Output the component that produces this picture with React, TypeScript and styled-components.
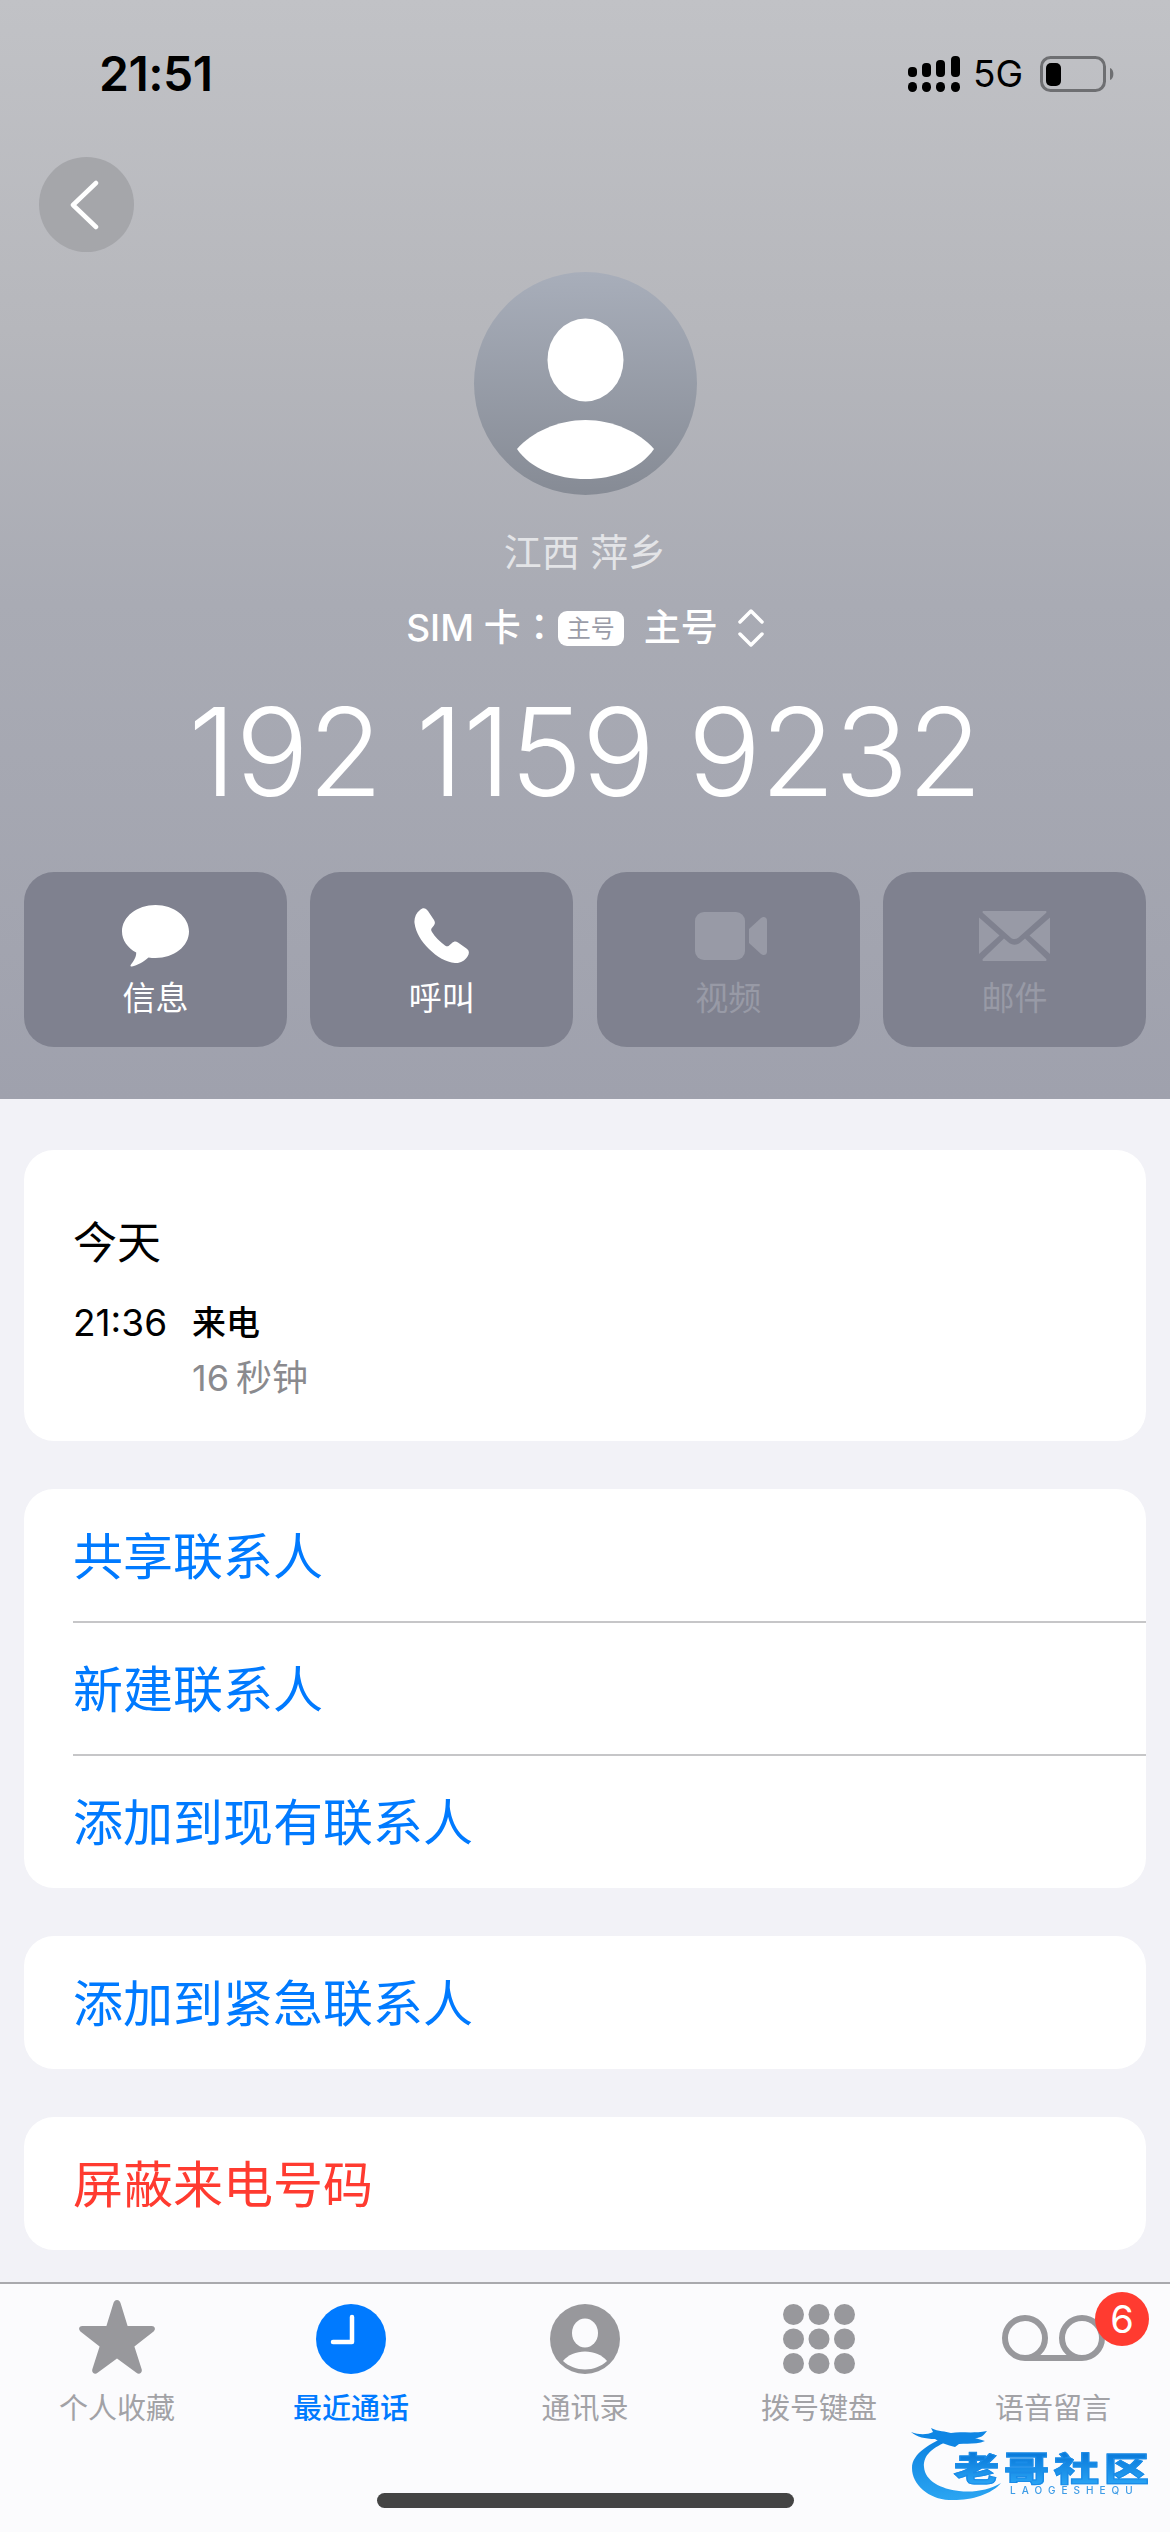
import React from 'react';
import styled, { createGlobalStyle } from 'styled-components';

const GlobalStyle = createGlobalStyle`
  html, body {
    margin: 0;
    padding: 0;
    background: #f2f2f7;
    font-family: Inter, "Noto Sans CJK SC", sans-serif;
  }
  * {
    box-sizing: border-box;
  }
`;

const Page = styled.div`
  width: 1170px;
  height: 2532px;
  display: flex;
  flex-direction: column;
  overflow: hidden;
  background: #f2f2f7;
`;

const Header = styled.header`
  height: 1099px;
  flex-shrink: 0;
  display: flex;
  flex-direction: column;
  background: linear-gradient(180deg, #c1c2c6 0%, #b6b7bc 30%, #a9abb4 55%, #9fa1ad 100%);
`;

const StatusBar = styled.div`
  height: 148px;
  flex-shrink: 0;
  display: flex;
  align-items: center;
  justify-content: space-between;
  padding: 0 55px 0 99px;
`;

const Time = styled.div`
  font-size: 48px;
  font-weight: 600;
  line-height: 56px;
  letter-spacing: -0.5px;
  color: #000;
`;

const StatusIcons = styled.div`
  display: flex;
  align-items: center;
`;

const NetworkLabel = styled.span`
  margin: 0 17px 0 13px;
  font-size: 37px;
  line-height: 40px;
  color: #000;
`;

const BackButton = styled.button`
  width: 95px;
  height: 95px;
  margin: 9px 0 0 39px;
  padding: 0 5px 0 0;
  border: none;
  border-radius: 50%;
  display: flex;
  align-items: center;
  justify-content: center;
  background: #a5a6aa;
`;

const Avatar = styled.div`
  width: 223px;
  height: 223px;
  margin: 20px auto 0;
  border-radius: 50%;
  overflow: hidden;
  background: linear-gradient(180deg, #a8aeba 0%, #868b95 100%);
`;

const Location = styled.div`
  margin-top: 32px;
  text-align: center;
  font-size: 38px;
  line-height: 50px;
  color: #e3e4e7;
`;

const SimLine = styled.div`
  margin-top: 26px;
  height: 50px;
  display: flex;
  align-items: center;
  justify-content: center;
  color: #fff;
  font-size: 37px;
  font-weight: 500;
  line-height: 50px;
`;

const SimLabel = styled.span`
  font-family: Inter, "Noto Sans CJK TC", sans-serif;
`;

const SimBadge = styled.span`
  width: 66px;
  height: 35px;
  margin: 0 20px 0 0;
  border-radius: 9px;
  display: flex;
  align-items: center;
  justify-content: center;
  background: #fff;
  color: #9a9ca8;
  font-size: 24px;
  font-weight: 400;
  line-height: 35px;
`;

const SimChevrons = styled.svg`
  margin-left: 20px;
`;

const PhoneNumber = styled.div`
  margin-top: 39px;
  text-align: center;
  font-size: 122px;
  font-weight: 350;
  line-height: 120px;
  letter-spacing: -0.8px;
  color: #fff;
`;

const Actions = styled.div`
  margin-top: 60px;
  padding: 0 24px;
  display: grid;
  grid-template-columns: repeat(4, 263px);
  justify-content: space-between;
`;

const ActionButton = styled.div<{ $disabled?: boolean }>`
  height: 175px;
  border-radius: 30px;
  display: flex;
  flex-direction: column;
  align-items: center;
  background: #7f818f;
  color: ${(p) => (p.$disabled ? '#989aa6' : '#fff')};
`;

const ActionIcon = styled.div`
  height: 100px;
  width: 100%;
  display: flex;
  align-items: center;
  justify-content: center;
  padding-top: 28px;
`;

const ActionLabel = styled.span`
  font-size: 33px;
  line-height: 44px;
  margin-top: 4px;
`;

const Content = styled.main`
  flex: 1;
  display: flex;
  flex-direction: column;
  gap: 48px;
  padding: 51px 24px 0;
`;

const Card = styled.section`
  border-radius: 30px;
  background: #fff;
  overflow: hidden;
`;

const HistoryCard = styled(Card)`
  height: 291px;
  padding: 65px 49px 0;
`;

const HistoryDay = styled.div`
  font-size: 44px;
  line-height: 56px;
  color: #000;
`;

const HistoryRow = styled.div`
  margin-top: 27px;
  display: flex;
`;

const HistoryTime = styled.div`
  width: 119px;
  font-size: 37px;
  line-height: 50px;
  color: #000;
`;

const HistoryType = styled.div`
  font-size: 34px;
  font-weight: 500;
  line-height: 50px;
  color: #000;
`;

const HistoryDuration = styled.div`
  margin-top: 5px;
  font-size: 36px;
  line-height: 50px;
  word-spacing: -3px;
  color: #8a8a8e;
`;

const ActionRow = styled.div<{ $danger?: boolean }>`
  height: 133px;
  margin-left: 49px;
  padding-top: 2px;
  display: flex;
  align-items: center;
  font-size: 50px;
  line-height: 60px;
  color: ${(p) => (p.$danger ? '#ff3b30' : '#007aff')};

  & + & {
    height: 134px;
    margin-top: -1px;
    padding-top: 1px;
    border-top: 2px solid #c6c6c8;
  }
`;

const TabBar = styled.nav`
  position: relative;
  height: 250px;
  flex-shrink: 0;
  display: grid;
  grid-template-columns: repeat(5, 234px);
  border-top: 2px solid #a9a9ad;
  background: #fbfbfd;
`;

const Tab = styled.div<{ $active?: boolean }>`
  position: relative;
  display: flex;
  flex-direction: column;
  align-items: center;
  color: ${(p) => (p.$active ? '#007aff' : '#a2a2a6')};
`;

const TabIcon = styled.div`
  height: 90px;
  display: flex;
  align-items: flex-end;
  justify-content: center;
`;

const TabLabel = styled.span<{ $active?: boolean }>`
  margin-top: 15px;
  font-size: 29px;
  line-height: 40px;
  font-weight: ${(p) => (p.$active ? 500 : 400)};
`;

const Badge = styled.span`
  position: absolute;
  top: 8px;
  left: 159px;
  width: 54px;
  height: 54px;
  border-radius: 50%;
  display: flex;
  align-items: center;
  justify-content: center;
  background: #ff3b30;
  color: #fff;
  font-size: 38px;
  line-height: 54px;
`;

const HomeBar = styled.div`
  position: absolute;
  left: 377px;
  bottom: 24px;
  width: 417px;
  height: 15px;
  border-radius: 8px;
  background: #444;
`;

const Watermark = styled.div`
  position: absolute;
  left: 911px;
  top: 139px;
  width: 240px;
  height: 84px;
  filter: blur(0.7px);
`;

const WatermarkTitle = styled.div`
  position: absolute;
  left: 43px;
  top: 29px;
  font-size: 45px;
  font-weight: 900;
  line-height: 45px;
  letter-spacing: 5px;
  white-space: nowrap;
  color: transparent;
  background: linear-gradient(180deg, #0877d8 0%, #2aa5f5 100%);
  background-clip: text;
  -webkit-background-clip: text;
  -webkit-text-stroke: 1.4px #1a8ce8;
  transform: scaleY(0.74);
  transform-origin: top left;
`;

const WatermarkCaption = styled.div`
  position: absolute;
  left: 99px;
  top: 61px;
  font-size: 10px;
  font-weight: 500;
  line-height: 13px;
  letter-spacing: 6px;
  white-space: nowrap;
  color: #3d9be6;
`;

const VoicemailSvg = styled.svg`
  margin-bottom: 13px;
`;

const VideoSvg = styled.svg`
  margin-left: 5px;
`;

const SignalIcon = () => (
  <svg width="52" height="36" viewBox="0 0 52 36" fill="#000">
    <rect x="0" y="11" width="9" height="10" rx="4" />
    <rect x="14" y="7" width="9" height="14" rx="4" />
    <rect x="28" y="4" width="9" height="17" rx="4" />
    <rect x="43" y="0" width="9" height="21" rx="4" />
    <rect x="0" y="26" width="9" height="10" rx="4.5" />
    <rect x="14" y="26" width="9" height="10" rx="4.5" />
    <rect x="28" y="26" width="9" height="10" rx="4.5" />
    <rect x="43" y="26" width="9" height="10" rx="4.5" />
  </svg>
);

const BatteryIcon = () => (
  <svg width="75" height="36" viewBox="0 0 75 36">
    <rect x="1.5" y="1.5" width="63" height="33" rx="9" fill="none" stroke="#6e6f72" strokeWidth="3" />
    <rect x="6" y="7" width="15" height="23" rx="5" fill="#000" />
    <path d="M70 12 C74.5 13 74.5 23 70 24 Z" fill="#6e6f72" />
  </svg>
);

const ChevronLeft = () => (
  <svg width="30" height="50" viewBox="0 0 30 50" fill="none">
    <path d="M27 3 L4 25 L27 47" stroke="#fff" strokeWidth="4.5" strokeLinecap="round" strokeLinejoin="round" />
  </svg>
);

const AvatarFigure = () => (
  <svg width="223" height="223" viewBox="0 0 223 223" fill="#fff">
    <ellipse cx="111.5" cy="88" rx="38" ry="41.5" />
    <path d="M43 177 C58 160 84 148 111.5 148 C139 148 165 160 180 177 C166 197 140 207 111.5 207 C83 207 57 197 43 177 Z" />
  </svg>
);

const MessageIcon = () => (
  <svg width="67" height="62" viewBox="0 0 67 62" fill="currentColor">
    <path d="M33.5 0 C52 0 67 11.8 67 26.5 C67 41.2 52 53 33.5 53 C31 53 28.7 52.8 26.5 52.4 C22 56.5 15 60.5 10 61.5 C8.5 61.7 8 60.4 9 59.4 C11.5 56.6 14.4 52.3 14.2 47.6 C5.5 42.8 0 35.2 0 26.5 C0 11.8 15 0 33.5 0 Z" />
  </svg>
);

const PhoneIcon = () => (
  <svg width="56" height="56" viewBox="0 0 56 56" fill="currentColor">
    <path d="M6 2 C9 -1 12 0 14 3 L20 12 C21.5 14.5 21 16 19.5 18 L17.5 20.5 C17 21.5 17 22.5 18 24 C21 29 26 34 31 37.5 C32.5 38.5 33.5 38.5 34.5 38 L38 35 C40 33.5 41.5 33 44 34.5 L52.5 40.5 C55.5 42.5 55.5 45.5 53.5 48.5 C50.5 53 46 55.5 41 55 C32 54 23 49 15 41 C7 33 2 25 0.5 15 C0 10 2 5 6 2 Z" />
  </svg>
);

const VideoIcon = () => (
  <VideoSvg width="72" height="48" viewBox="0 0 72 48" fill="currentColor">
    <rect x="0" y="0" width="50" height="48" rx="9" />
    <path d="M54 17 L66 6 C68.5 3.8 72 5 72 8.5 V39.5 C72 43 68.5 44.2 66 42 L54 31 Z" />
  </VideoSvg>
);

const MailIcon = () => (
  <svg width="71" height="50" viewBox="0 0 71 50" fill="currentColor">
    <path d="M5 0 H66 C67.5 0 68 1 67 2 L39.5 26.5 C37.2 28.6 33.8 28.6 31.5 26.5 L4 2 C3 1 3.5 0 5 0 Z" />
    <path d="M0 6.5 V43 L20.5 24.5 Z" />
    <path d="M71 6.5 V43 L50.5 24.5 Z" />
    <path d="M25 27.5 L29 31 C33 34.5 38 34.5 42 31 L46 27.5 L67 47.8 C68 48.8 67.5 50 66 50 H5 C3.5 50 3 48.8 4 47.8 Z" />
  </svg>
);

const StarIcon = () => (
  <svg width="76" height="74" viewBox="0 0 76 74" fill="#98989c">
    <path d="M38 0 C40 0 41 1.4 41.6 3.2 L48.6 26 H72.6 C76 26 77 29.4 74.6 31.4 L55.4 46.4 L62.6 69 C63.8 72.6 60.4 75 57.4 72.8 L38 58.4 L18.6 72.8 C15.6 75 12.2 72.6 13.4 69 L20.6 46.4 L1.4 31.4 C-1 29.4 0 26 3.4 26 H27.4 L34.4 3.2 C35 1.4 36 0 38 0 Z" />
  </svg>
);

const ClockIcon = () => (
  <svg width="70" height="70" viewBox="0 0 70 70">
    <circle cx="35" cy="35" r="35" fill="#007aff" />
    <path d="M36 13 V38 H17" fill="none" stroke="#fff" strokeWidth="4.5" strokeLinecap="round" strokeLinejoin="round" />
  </svg>
);

const PersonIcon = () => (
  <svg width="70" height="70" viewBox="0 0 70 70">
    <circle cx="35" cy="35" r="35" fill="#98989c" />
    <ellipse cx="35" cy="29" rx="13" ry="14.5" fill="#fbfbfd" />
    <path d="M13 57 C18 51 26 47.5 35 47.5 C44 47.5 52 51 57 57 C51 62.5 43.5 65.5 35 65.5 C26.5 65.5 19 62.5 13 57 Z" fill="#fbfbfd" />
  </svg>
);

const KeypadIcon = () => (
  <svg width="72" height="70" viewBox="0 0 72 70" fill="#98989c">
    {[0, 1, 2].map((row) =>
      [0, 1, 2].map((col) => (
        <circle key={`${row}-${col}`} cx={10.5 + col * 25.5} cy={10.5 + row * 24.5} r="10.5" />
      )),
    )}
  </svg>
);

const VoicemailIcon = () => (
  <VoicemailSvg width="103" height="46" viewBox="0 0 103 46" fill="none" stroke="#98989c" strokeWidth="6">
    <circle cx="23" cy="23" r="20" />
    <circle cx="80" cy="23" r="20" />
    <path d="M23 43 H80" />
  </VoicemailSvg>
);

const DragonLogo = () => (
  <svg width="100" height="84" viewBox="0 0 100 84">
    <defs>
      <linearGradient id="dragon" x1="0" y1="0" x2="0" y2="1">
        <stop offset="0" stopColor="#0a7fdf" />
        <stop offset="1" stopColor="#2ba5f2" />
      </linearGradient>
    </defs>
    <path
      d="M38 12 C20 20 1 30 1 45 C1 62 18 76 38 77 C58 78 80 72 90 60 C78 67 62 70 48 68 C30 66 14 58 13 44 C12 32 22 24 38 18 Z"
      fill="url(#dragon)"
    />
    <path
      d="M0 9 C8 12 16 12 22 9 L20 5 C28 9 34 8 40 10 C50 8 60 11 76 8 C72 13 70 15 64 15 L74 18 C66 22 56 20 48 21 L44 24 C36 22 30 20 24 16 C14 16 6 14 0 9 Z"
      fill="#0f86e4"
    />
  </svg>
);

const tabs = [
  { label: '个人收藏', icon: <StarIcon /> },
  { label: '最近通话', icon: <ClockIcon />, active: true },
  { label: '通讯录', icon: <PersonIcon /> },
  { label: '拨号键盘', icon: <KeypadIcon /> },
  { label: '语音留言', icon: <VoicemailIcon />, badge: '6' },
];

const actions = [
  { label: '信息', icon: <MessageIcon /> },
  { label: '呼叫', icon: <PhoneIcon /> },
  { label: '视频', icon: <VideoIcon />, disabled: true },
  { label: '邮件', icon: <MailIcon />, disabled: true },
];

const App = () => (
  <Page>
    <GlobalStyle />
    <Header>
      <StatusBar>
        <Time>21:51</Time>
        <StatusIcons>
          <SignalIcon />
          <NetworkLabel>5G</NetworkLabel>
          <BatteryIcon />
        </StatusIcons>
      </StatusBar>
      <BackButton aria-label="返回">
        <ChevronLeft />
      </BackButton>
      <Avatar>
        <AvatarFigure />
      </Avatar>
      <Location>江西 萍乡</Location>
      <SimLine>
        <SimLabel>SIM 卡：</SimLabel>
        <SimBadge>主号</SimBadge>
        <span>主号</span>
        <SimChevrons width="26" height="38" viewBox="0 0 26 38" fill="none" stroke="#fff" strokeWidth="3.5" strokeLinecap="round" strokeLinejoin="round">
          <path d="M2 13 L13 2 L24 13" />
          <path d="M2 25 L13 36 L24 25" />
        </SimChevrons>
      </SimLine>
      <PhoneNumber>192 1159 9232</PhoneNumber>
      <Actions>
        {actions.map((action) => (
          <ActionButton key={action.label} $disabled={action.disabled}>
            <ActionIcon>{action.icon}</ActionIcon>
            <ActionLabel>{action.label}</ActionLabel>
          </ActionButton>
        ))}
      </Actions>
    </Header>
    <Content>
      <HistoryCard>
        <HistoryDay>今天</HistoryDay>
        <HistoryRow>
          <HistoryTime>21:36</HistoryTime>
          <div>
            <HistoryType>来电</HistoryType>
            <HistoryDuration>16 秒钟</HistoryDuration>
          </div>
        </HistoryRow>
      </HistoryCard>
      <Card>
        <ActionRow>共享联系人</ActionRow>
        <ActionRow>新建联系人</ActionRow>
        <ActionRow>添加到现有联系人</ActionRow>
      </Card>
      <Card>
        <ActionRow>添加到紧急联系人</ActionRow>
      </Card>
      <Card>
        <ActionRow $danger>屏蔽来电号码</ActionRow>
      </Card>
    </Content>
    <TabBar>
      {tabs.map((tab) => (
        <Tab key={tab.label} $active={tab.active}>
          <TabIcon>{tab.icon}</TabIcon>
          <TabLabel $active={tab.active}>{tab.label}</TabLabel>
          {tab.badge && <Badge>{tab.badge}</Badge>}
        </Tab>
      ))}
      <HomeBar />
      <Watermark>
        <DragonLogo />
        <WatermarkTitle>老哥社区</WatermarkTitle>
        <WatermarkCaption>LAOGESHEQU</WatermarkCaption>
      </Watermark>
    </TabBar>
  </Page>
);

export default App;
